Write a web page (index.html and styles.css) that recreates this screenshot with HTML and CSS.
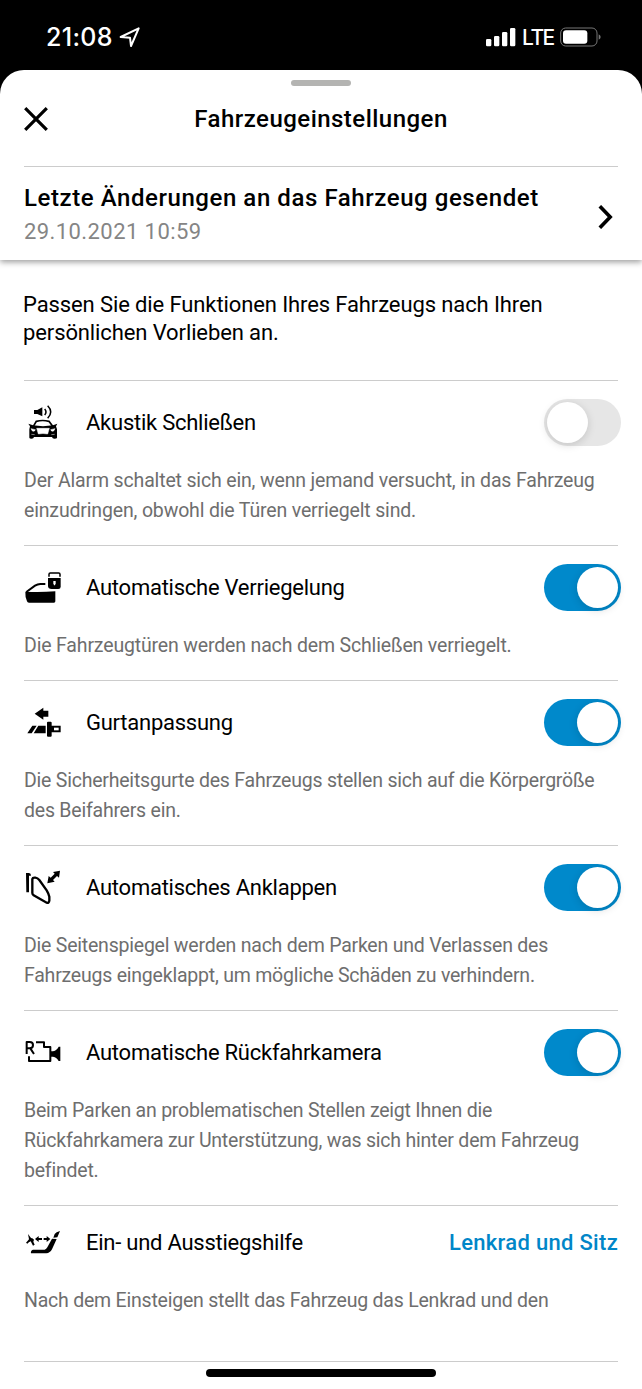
FILE: index.html
```html
<!DOCTYPE html>
<html lang="de">
<head>
<meta charset="utf-8">
<title>Fahrzeugeinstellungen</title>
<link rel="stylesheet" href="styles.css">
</head>
<body>
<div class="status">
  <div class="clock"><span class="time">21:08</span>
    <svg width="22" height="22" viewBox="0 0 66 66"><path d="M5 33 L59 7 L36 60 L33 35 Z" fill="none" stroke="#fff" stroke-width="6" stroke-linejoin="round"/></svg>
  </div>
  <div class="signals">
    <svg width="30" height="20" viewBox="0 0 90 60" fill="#fff"><rect x="0" y="36" width="16" height="22" rx="4"/><rect x="24" y="27" width="16" height="31" rx="4"/><rect x="48" y="15" width="16" height="43" rx="4"/><rect x="72" y="3" width="16" height="55" rx="4"/></svg>
    <span class="lte">LTE</span>
    <svg width="42" height="20" viewBox="0 0 126 60"><rect x="2" y="3" width="109" height="54" rx="15" fill="none" stroke="#777" stroke-width="3"/><rect x="9" y="10" width="73" height="40" rx="9" fill="#fff"/><path d="M116 22q6 3 6 8t-6 8z" fill="#777"/></svg>
  </div>
</div>
<main class="sheet">
  <header class="top">
    <div class="grabber"></div>
    <div class="titlebar">
      <svg class="close" width="24" height="24" viewBox="0 0 24 24"><path d="M1.2 1.2 22.8 22.8M22.8 1.2 1.2 22.8" stroke="#000" stroke-width="3.2"/></svg>
      <h1 class="title">Fahrzeugeinstellungen</h1>
    </div>
    <div class="changes">
      <div>
        <div class="changes-title">Letzte Änderungen an das Fahrzeug gesendet</div>
        <div class="changes-date">29.10.2021 10:59</div>
      </div>
      <svg class="chevron" width="16" height="24" viewBox="0 0 16 24"><path d="M1.8 1.2 12.200 12 1.800 22.800" fill="none" stroke="#000" stroke-width="3.6"/></svg>
    </div>
  </header>
  <p class="intro">Passen Sie die Funktionen Ihres Fahrzeugs nach Ihren<br>persönlichen Vorlieben an.</p>
  <section class="list">
    <article class="item loose">
      <div class="head">
        <svg class="icon" viewBox="27 36 120 120"><path d="M57 60h10l15-8v27l-15-7H57z"/><g fill="none" stroke="#000"><path d="M89 57q8 9 0 18M98 47q18 18 0 38" stroke-width="4.5"/><path d="M55 109l9-15q19-5 38 0l11 15" stroke-width="5"/></g><path d="M40 101l14 5q30 5 60 0l13-5-4 8 3 9v25q0 3-8 3-6 0-7-5H57q-1 5-7 5-7 0-7-3v-25l2-9z"/><path d="M48 116l13 3q-2 7-9 4zM120 116l-13 3q2 7 9 4zM65 115h38l-5 17q-14-3-28 0zM49 133l10 1M119 133l-10 1" fill="#fff" stroke="#fff" stroke-width="1.5"/></svg>
        <h2 class="name">Akustik Schließen</h2><span class="switch"></span>
      </div>
      <p class="desc">Der Alarm schaltet sich ein, wenn jemand versucht, in das Fahrzeug<br>einzudringen, obwohl die Türen verriegelt sind.</p>
    </article>
    <article class="item loose">
      <div class="head">
        <svg class="icon" viewBox="27 21 120 120"><path d="M31 95q45 2 90-1v30q0 4-4 4H42q-5 0-6-4-6-14-5-29z"/><path d="M34 96l26-19q8-5 16-5h15" fill="none" stroke="#000" stroke-width="6"/><path d="M99 54h38v26q0 7-7 7h-20q-11 0-11-9z"/><path d="M102 50v-7q0-4 4-4h25q4 0 4 4v7" fill="none" stroke="#000" stroke-width="4.5"/><path d="M115 63h7v7l-2 6h-3l-2-6z" fill="#fff"/></svg>
        <h2 class="name">Automatische Verriegelung</h2><span class="switch on"></span>
      </div>
      <p class="desc">Die Fahrzeugtüren werden nach dem Schließen verriegelt.</p>
    </article>
    <article class="item">
      <div class="head">
        <svg class="icon" viewBox="27 21 120 120"><path d="M59 56l26-18v9h15v18H85v9zM37 115l15-23h13l-15 23zM56 115l14-23h22v23zM96 83q0-3 3-3h8q3 0 3 3v9h27v20h-27v10q0 3-3 3h-8q-3 0-3-3z"/><path d="M117 98h14v8h-14z" fill="#fff"/></svg>
        <h2 class="name">Gurtanpassung</h2><span class="switch on"></span>
      </div>
      <p class="desc">Die Sicherheitsgurte des Fahrzeugs stellen sich auf die Körpergröße<br>des Beifahrers ein.</p>
    </article>
    <article class="item">
      <div class="head">
        <svg class="icon" viewBox="27 21 120 120"><path d="M33 39h9q6 1 6 8h-6v50h-8z"/><path d="M52 57q1-5 9-4 7 1 12 7l22 31q6 10 8 19v12q-1 8-8 6L56 106q-4-3-4-7z" fill="none" stroke="#000" stroke-width="7"/><path d="M135 32l-3 21-6-5-12 12 5 5-22 5 4-22 6 5 12-12-5-5z"/></svg>
        <h2 class="name">Automatisches Anklappen</h2><span class="switch on"></span>
      </div>
      <p class="desc">Die Seitenspiegel werden nach dem Parken und Verlassen des<br>Fahrzeugs eingeklappt, um mögliche Schäden zu verhindern.</p>
    </article>
    <article class="item">
      <div class="head">
        <svg class="icon" viewBox="27 21 120 120"><g fill="none" stroke="#000" stroke-width="6"><path d="M35 87V51h9q10 0 10 9 0 10-10 10h-9M46 70l11 17M63 52h24v14h19v42H42V94" stroke-linejoin="round"/></g><path d="M106 79h8q13-4 17-14h5v43h-5q-5-11-17-13h-8z"/></svg>
        <h2 class="name">Automatische Rückfahrkamera</h2><span class="switch on"></span>
      </div>
      <p class="desc">Beim Parken an problematischen Stellen zeigt Ihnen die<br>Rückfahrkamera zur Unterstützung, was sich hinter dem Fahrzeug<br>befindet.</p>
    </article>
    <article class="item last">
      <div class="head">
        <svg class="icon" viewBox="27 21 120 120"><path d="M39 57l9 12q6 0 9 5l-2 6 4 9-5 3-7-13q-6 2-10 7l-4-3 9-10zM60 72l11-9v6h10v6H71v6zM106 72l-11-9v6h-9v6h9v6zM119 57q4-6 16-9l-8 19-12 1zM111 71l14 1-14 31q-6 11-17 12H48q-2-8 6-11h35q5-1 8-7z"/></svg>
        <h2 class="name">Ein- und Ausstiegshilfe</h2><a class="choice">Lenkrad und Sitz</a>
      </div>
      <p class="desc">Nach dem Einsteigen stellt das Fahrzeug das Lenkrad und den</p>
    </article>
  </section>
  <div class="home"></div>
</main>
</body>
</html>
```
FILE: styles.css
```css
* { box-sizing: border-box; }
body { margin: 0; width: 642px; height: 1389px; overflow: hidden; background: #000; color: #000; font-family: Roboto, "Noto Sans", sans-serif; }
h1, h2, p { margin: 0; font-weight: 400; }
svg { display: block; flex: none; }
.status { height: 70px; display: flex; justify-content: space-between; align-items: flex-start; padding: 26px 40px 0 46px; color: #fff; font-family: Inter, sans-serif; }
.clock { display: flex; align-items: center; gap: 6px; height: 22px; }
.time { font-size: 25px; font-weight: 500; letter-spacing: .3px; }
.signals { display: flex; align-items: center; gap: 6px; height: 22px; }
.lte { font-size: 21px; font-weight: 500; letter-spacing: -1.5px; width: 32px; }
.sheet { height: 1319px; background: #fff; border-radius: 24px 24px 0 0; display: flex; flex-direction: column; overflow: hidden; }
.top { height: 190px; flex: none; box-shadow: 0 2px 6px rgba(0,0,0,.4); }
.grabber { width: 60px; height: 6px; margin: 10px auto 0; border-radius: 3px; background: #b4b4b2; }
.titlebar { height: 81px; margin: 0 24px; display: grid; grid-template-columns: 24px 1fr 24px; align-items: center; border-bottom: 1px solid #ccc; padding-bottom: 15px; }
.title { text-align: center; font-size: 24px; font-weight: 500; letter-spacing: .47px; }
.changes { height: 93px; padding: 2px 28px 0 24px; display: flex; justify-content: space-between; align-items: center; }
.changes-title { font-size: 24px; line-height: 34px; font-weight: 500; letter-spacing: .57px; }
.changes-date { font-size: 22px; line-height: 33px; color: #858585; letter-spacing: .42px; }
.chevron { margin-top: 4px; }
.intro { height: 120px; flex: none; padding: 31px 23px 0; font-size: 22px; line-height: 28px; letter-spacing: -.11px; }
.list { margin: 0 24px; }
.item { border-top: 1px solid #ccc; padding-bottom: 19px; }
.head { height: 82px; margin-bottom: 3px; display: flex; align-items: center; margin-right: -3px; }
.icon { width: 40px; height: 40px; margin-right: 22px; }
.name { font-size: 22px; flex: 1; letter-spacing: -.25px; }
.switch { width: 77px; height: 47px; border-radius: 24px; background: #e6e6e6; display: flex; align-items: center; padding: 0 3px; }
.switch::before { content: ""; width: 41px; height: 41px; border-radius: 50%; background: #fff; box-shadow: 0 2px 8px rgba(0,0,0,.15); }
.on { background: #0089cb; justify-content: flex-end; }
.desc { font-size: 19.500px; line-height: 30px; color: #6e6e6e; white-space: nowrap; letter-spacing: -.22px; }
.loose .desc { letter-spacing: -.16px; }
.last { height: 157px; border-bottom: 1px solid #ccc; }
.last .head { height: 72px; margin: 0 0 8px; }
.choice { color: #0086c8; font-size: 22px; font-weight: 500; letter-spacing: .3px; }
.home { width: 230px; height: 8px; margin: 7px auto 0; border-radius: 4px; background: #000; flex: none; }
```
